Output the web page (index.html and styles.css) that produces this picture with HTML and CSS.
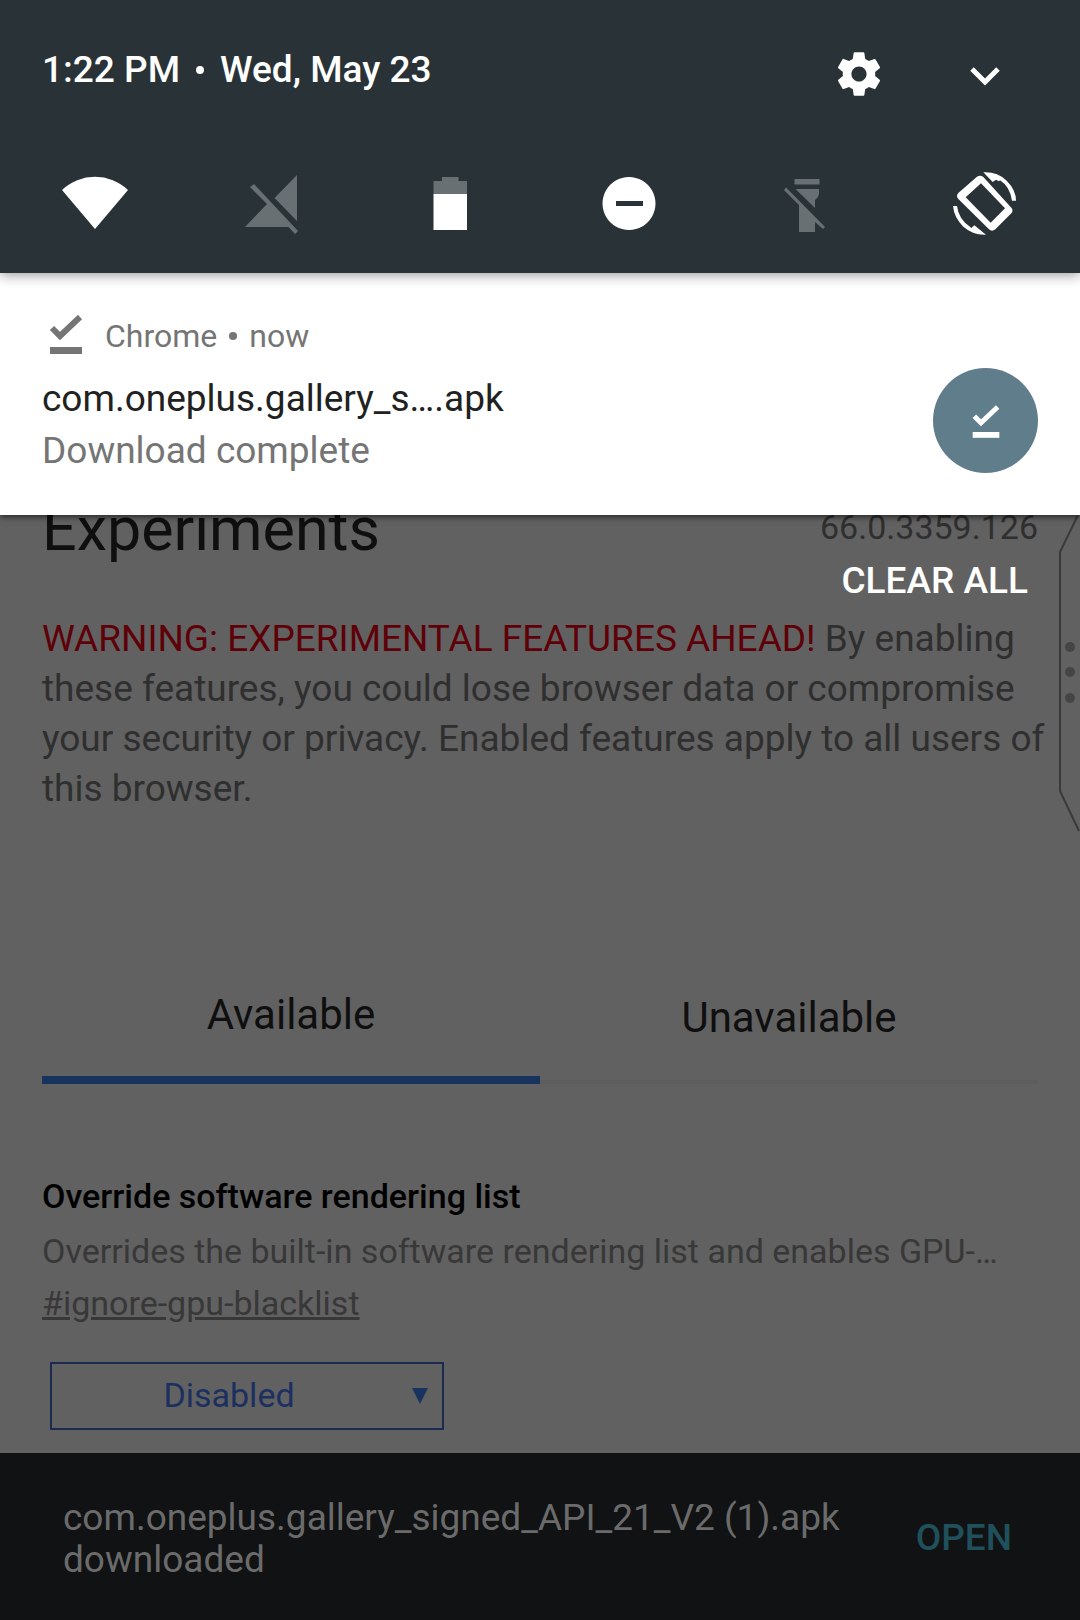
FILE: index.html
```
<!DOCTYPE html>
<html lang="en">
<head>
    <meta charset="UTF-8">
    <meta name="viewport" content="width=device-width, initial-scale=1">
    <title>Experiments</title>
    <link rel="stylesheet" href="styles.css">
</head>
<body>
    <header class="shade">
        <div class="statusRow">
            <div class="clock"><span>1:22 PM</span><span class="dot"></span><span>Wed, May 23</span></div>
            <div class="statusButtons">
                <button type="button" aria-label="Settings">
                    <svg viewBox="0 0 24 24"><path d="M19.43 12.98c.04-.32.07-.64.07-.98s-.03-.66-.07-.98l2.11-1.65c.19-.15.24-.42.12-.64l-2-3.46c-.12-.22-.39-.3-.61-.22l-2.49 1c-.52-.4-1.08-.73-1.69-.98l-.38-2.65C14.46 2.18 14.25 2 14 2h-4c-.25 0-.46.18-.49.42l-.38 2.65c-.61.25-1.17.59-1.69.98l-2.49-1c-.23-.09-.49 0-.61.22l-2 3.46c-.13.22-.07.49.12.64l2.11 1.65c-.04.32-.07.65-.07.98s.03.66.07.98l-2.11 1.65c-.19.15-.24.42-.12.64l2 3.46c.12.22.39.3.61.22l2.49-1c.52.4 1.08.73 1.69.98l.38 2.65c.03.24.24.42.49.42h4c.25 0 .46-.18.49-.42l.38-2.65c.61-.25 1.17-.59 1.69-.98l2.49 1c.23.09.49 0 .61-.22l2-3.46c.12-.22.07-.49-.12-.64l-2.11-1.65zM12 15.5c-1.93 0-3.5-1.57-3.5-3.5s1.57-3.5 3.5-3.5 3.5 1.57 3.5 3.5-1.57 3.5-3.5 3.5z"/></svg>
                </button>
                <button type="button" aria-label="Expand">
                    <svg viewBox="0 0 52 52"><path d="M13 21L26 34L39 21" fill="none" stroke="#fff" stroke-width="5"/></svg>
                </button>
            </div>
        </div>

        <div class="tiles">
            <button type="button" aria-label="Wi-Fi">
                <svg viewBox="0 0 72 72"><path d="M3 22A48 48 0 0 1 69 22L36 61Z"/></svg>
            </button>
            <button type="button" class="off" aria-label="Mobile data">
                <svg viewBox="2 0 72 72"><path d="M10 59L32 36L15 19L19 16L63 63L60 66L53.5 59ZM62 7V53L39.5 30Z"/></svg>
            </button>
            <button type="button" aria-label="Battery">
                <svg viewBox="1 0 72 72"><path class="faded" d="M19.5 26V13H28V9H44.5V13H53V26Z"/><path d="M19.5 26H53V62H19.5Z"/></svg>
            </button>
            <button type="button" aria-label="Do not disturb">
                <svg viewBox="0 0 72 72"><path fill-rule="evenodd" d="M36 9a26.5 26.5 0 1 0 .01 0ZM23 33H50V38H23Z"/></svg>
            </button>
            <button type="button" class="off" aria-label="Flashlight">
                <svg viewBox="2 0 72 72"><path d="M25.5 11H50.5V16.5H25.5ZM26.5 21H50V25Q50 29 46 32V40ZM17 19.5L56 59L54 61L46 54V64H30V37L15 22Z"/></svg>
            </button>
            <button type="button" aria-label="Auto-rotate">
                <svg viewBox="27 24 216 216"><path fill-rule="evenodd" d="M110 51Q120 43 130 51L214 143Q221 151 214 160L166 208Q156 216 147 208L55 117Q47 108 55 99ZM123 70L77 112L152 188L195 145Z"/><path d="M130 37Q172 35 200 62Q228 90 228 122H216Q210 80 180 61L177 64L168 59L158 66ZM39 138H51Q56 178 90 200L94 204L103 196L138 224Q100 226 70 200Q42 172 39 138Z"/></svg>
            </button>
        </div>
    </header>

    <section class="notification">
        <div class="notificationText">
            <div class="source">
                <svg viewBox="0 0 36 40"><path d="M4 13L12 21L32 2" fill="none" stroke="#757575" stroke-width="6"/><path d="M2 32H34V39H2Z" fill="#757575"/></svg>
                <span>Chrome</span><span class="dot"></span><span>now</span>
            </div>
            <div class="fileName">com.oneplus.gallery_s….apk</div>
            <div class="fileState">Download complete</div>
        </div>
        <div class="badge">
            <svg viewBox="0 0 36 40"><path d="M4 13L12 21L32 2" fill="none" stroke="#fff" stroke-width="6"/><path d="M2 32H34V39H2Z" fill="#fff"/></svg>
        </div>
    </section>

    <button type="button" class="clearAll">CLEAR ALL</button>

    <main class="flags">
        <svg class="edgeHandle" viewBox="0 0 22 320">
            <path d="M20 0L2 37V276L21 316" fill="none" stroke="#3a3a3a" stroke-width="2"/>
            <circle cx="12" cy="132" r="5"/><circle cx="12" cy="157" r="5"/><circle cx="12" cy="183" r="5"/>
        </svg>

        <div class="titleRow">
            <h1>Experiments</h1>
            <span class="version">66.0.3359.126</span>
        </div>

        <p class="blurb"><span class="warning">WARNING: EXPERIMENTAL FEATURES AHEAD!</span> By enabling these features, you could lose browser data or compromise your security or privacy. Enabled features apply to all users of this browser.</p>

        <div class="tabs">
            <button type="button" class="tab selected">Available</button>
            <button type="button" class="tab">Unavailable</button>
        </div>

        <div class="experiment">
            <h2>Override software rendering list</h2>
            <p>Overrides the built-in software rendering list and enables GPU-…</p>
            <a href="#ignore-gpu-blacklist">#ignore-gpu-blacklist</a>
            <div class="selectBox">
                <select aria-label="Override software rendering list">
                    <option>Disabled</option>
                    <option>Enabled</option>
                </select>
            </div>
        </div>
    </main>

    <footer class="snackbar">
        <p>com.oneplus.gallery_signed_API_21_V2 (1).apk downloaded</p>
        <button type="button">OPEN</button>
    </footer>
</body>
</html>
```
FILE: styles.css
```
* {
    box-sizing: border-box;
}

body {
    margin: 0;
    min-height: 100vh;
    display: flex;
    flex-direction: column;
    font-family: Roboto, "Liberation Sans", sans-serif;
    background-color: #616161;
}

button {
    background: none;
    border: none;
    padding: 0;
    font-family: inherit;
    cursor: pointer;
}

svg {
    display: block;
}

h1, h2, p {
    margin: 0;
    font-weight: 400;
}

.dot {
    width: 8px;
    height: 8px;
    border-radius: 50%;
    background-color: currentColor;
}

/* quick settings */
.shade {
    position: relative;
    z-index: 2;
    height: 273px;
    padding: 44px 42px 0;
    background-color: #293236;
    color: #fff;
    box-shadow: 0 2px 12px rgba(0, 0, 0, 0.4);
}

.statusRow {
    display: flex;
    justify-content: space-between;
    align-items: center;
    height: 60px;
}

.clock {
    display: flex;
    align-items: center;
    gap: 16px;
    font-size: 37px;
    font-weight: 500;
    line-height: 50px;
    padding-bottom: 8px;
}

.statusButtons {
    display: flex;
    gap: 20px;
}

.statusButtons button {
    width: 106px;
    display: flex;
    justify-content: center;
}

.statusButtons svg {
    width: 52px;
    height: 52px;
    fill: #fff;
}

.tiles {
    display: flex;
    justify-content: space-between;
    margin-top: 64px;
}

.tiles button {
    width: 106px;
    display: flex;
    justify-content: center;
}

.tiles svg {
    width: 72px;
    height: 72px;
    fill: #fff;
}

.tiles .off svg,
.tiles .faded {
    fill: #697073;
}

/* notification */
.notification {
    position: relative;
    z-index: 1;
    display: flex;
    justify-content: space-between;
    align-items: flex-end;
    height: 242px;
    padding: 0 42px 38px;
    background-color: #fff;
    box-shadow: 0 2px 6px rgba(0, 0, 0, 0.6);
}

.source {
    display: flex;
    align-items: center;
    gap: 12px;
    height: 44px;
    margin-bottom: 15px;
    color: #757575;
    font-size: 32px;
}

.source svg {
    width: 36px;
    height: 40px;
    margin: 0 9px 2px 6px;
}

.fileName,
.fileState {
    font-size: 37px;
    line-height: 52px;
    color: #212121;
}

.fileState {
    color: #757575;
}

.badge {
    display: flex;
    justify-content: center;
    align-items: center;
    width: 105px;
    height: 105px;
    margin-bottom: 4px;
    padding-top: 2px;
    border-radius: 50%;
    background-color: #607d8b;
}

.badge svg {
    width: 30px;
    height: 34px;
}

/* floats over the page below the notification */
.clearAll {
    position: absolute;
    top: 556px;
    right: 52px;
    z-index: 1;
    color: #fff;
    font-size: 37px;
    font-weight: 500;
    line-height: 50px;
}

/* flags page */
.flags {
    position: relative;
    flex: 1;
    padding: 0 42px 22px;
    color: #2f2f2f;
}

.edgeHandle {
    position: absolute;
    top: 0;
    right: 0;
    width: 22px;
    height: 320px;
    fill: #454545;
}

.titleRow {
    display: flex;
    justify-content: space-between;
    height: 99px;
}

h1 {
    margin-top: -22px;
    font-size: 61px;
    line-height: 72px;
    color: #0f0f0f;
}

.version {
    margin-top: -10px;
    font-size: 34px;
    line-height: 44px;
}

.blurb {
    margin-right: -12px;
    font-size: 37px;
    line-height: 50px;
}

.warning {
    color: #5e0008;
}

.tabs {
    display: flex;
    margin-top: 130px;
}

.tab {
    flex: 1;
    height: 140px;
    padding-top: 10px;
    border-bottom: 4px solid #5d5d5d;
    font-size: 42px;
    color: #0f0f0f;
}

.tab.selected {
    padding-top: 8px;
    border-bottom: 8px solid #19335f;
}

.experiment {
    margin-top: 86px;
}

.experiment h2 {
    font-size: 34px;
    font-weight: 500;
    line-height: 52px;
    color: #000;
}

.experiment p,
.experiment a {
    display: block;
    font-size: 34px;
    line-height: 52px;
    color: #383838;
}

.experiment p {
    margin-top: 3px;
    white-space: nowrap;
}

.selectBox {
    position: relative;
    width: 394px;
    margin: 33px 0 0 8px;
}

.selectBox::after {
    content: "";
    position: absolute;
    top: 26px;
    right: 16px;
    border-left: 8px solid transparent;
    border-right: 8px solid transparent;
    border-top: 16px solid #19335f;
}

select {
    appearance: none;
    display: block;
    width: 100%;
    height: 68px;
    padding: 0 36px 2px 0;
    border: 2px solid #1b2b50;
    background: none;
    font-family: inherit;
    font-size: 34px;
    text-align: center;
    text-align-last: center;
    color: #1b3060;
}

/* download bar */
.snackbar {
    display: flex;
    justify-content: space-between;
    align-items: center;
    gap: 60px;
    height: 167px;
    padding: 2px 68px 0 63px;
    background-color: #111213;
    color: #6b6b6b;
    font-size: 37px;
    line-height: 42px;
}

.snackbar p {
    padding-top: 3px;
}

.snackbar button {
    font-size: 37px;
    font-weight: 500;
    color: #1f505b;
}
```
